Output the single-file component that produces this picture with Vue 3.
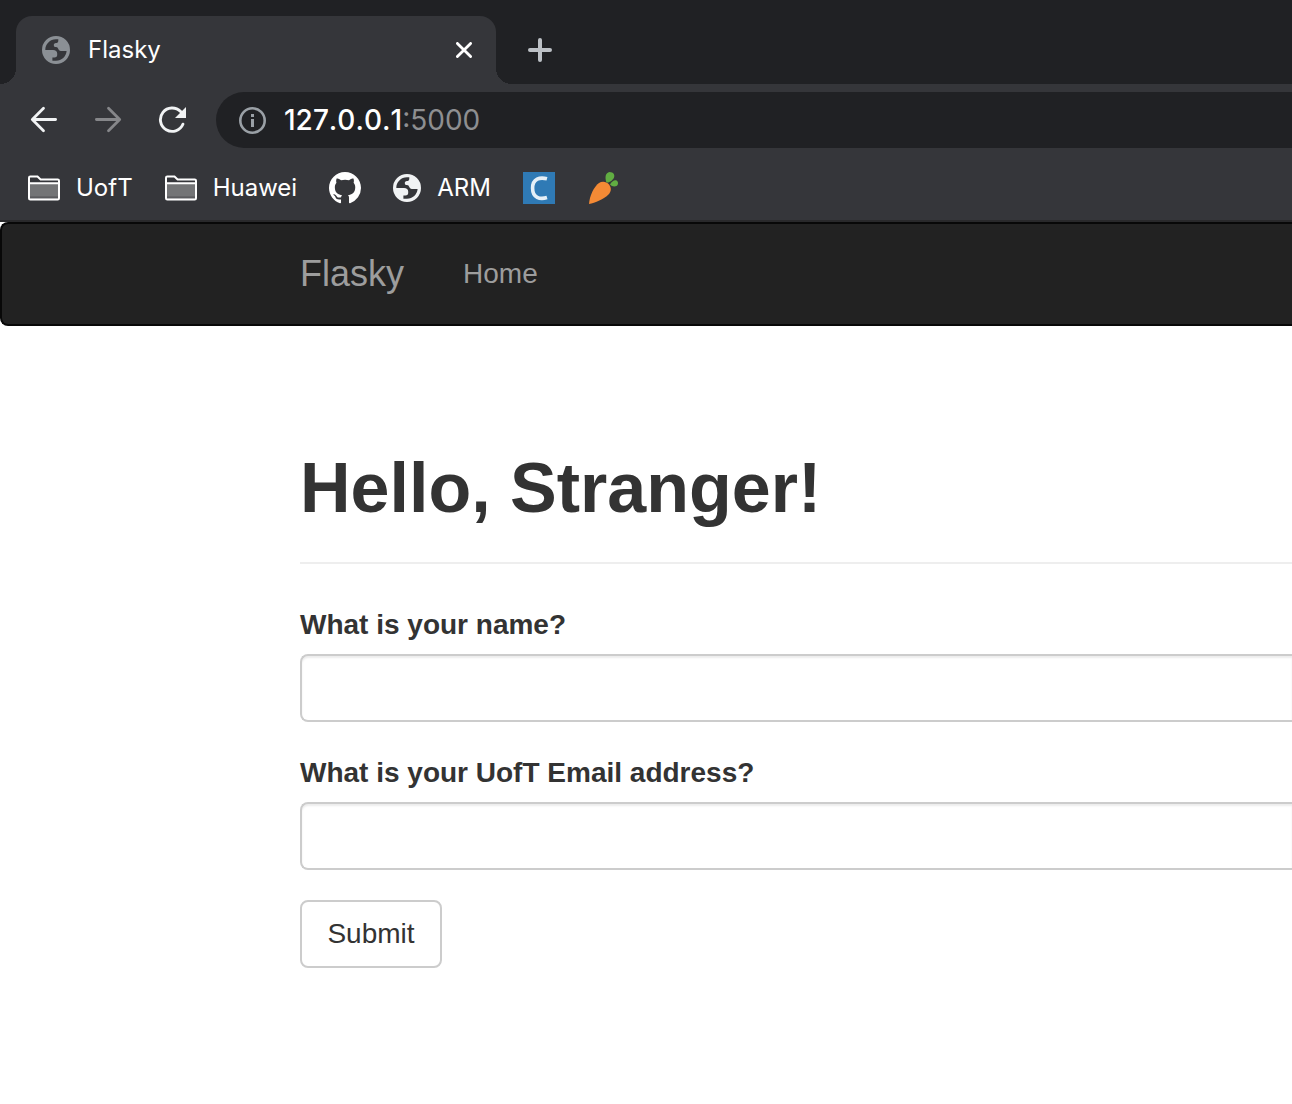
<script setup>
import { ref } from 'vue'

const name = ref('')
const email = ref('')

const globePath =
  'M14 0a14 14 0 1 0 0 28a14 14 0 1 0 0-28Z' +
  'M3.3 14C3.3 8.2 8 3.3 14 3.3H16.3V4.4C16.3 6.2 15.4 7 14 7C12.4 7 11.8 8 11.8 9.2C11.8 10.6 12.7 11 14 11C16.6 11 16 14.9 18.8 14.9H24.6C24.2 20.2 19.6 24.7 14 24.7H10.4V21.4H12.4C14.3 21.4 15.2 20.4 15.2 18.7V17.6C15.2 15.4 13.6 14 11 14Z'
</script>

<template>
  <div class="window">
    <header class="chrome">
      <div class="tab-strip">
        <div class="tab">
          <svg class="globe muted" viewBox="0 0 28 28" aria-hidden="true">
            <path :d="globePath" fill-rule="evenodd" />
          </svg>
          <span class="tab-title">Flasky</span>
          <button class="icon-button" type="button" aria-label="Close tab">
            <svg width="16" height="16" viewBox="0 0 16 16">
              <path d="M1.4 1.4 14.6 14.6M14.6 1.4 1.4 14.6" stroke="#fff" stroke-width="2.8" stroke-linecap="round" />
            </svg>
          </button>
        </div>
        <button class="icon-button new-tab" type="button" aria-label="New tab">
          <svg width="24" height="24" viewBox="0 0 24 24">
            <path d="M12 2V22M2 12H22" stroke="#bdc1c6" stroke-width="4" stroke-linecap="round" />
          </svg>
        </button>
      </div>

      <div class="toolbar">
        <nav class="controls" aria-label="Browser controls">
          <button class="icon-button" type="button" aria-label="Back">
            <svg width="28" height="28" viewBox="0 0 28 28" fill="none" stroke="#f1f3f4" stroke-width="2.8" stroke-linecap="round" stroke-linejoin="round">
              <path d="M25.6 13.5H2.6M13.5 2.3 2.3 13.5 13.5 24.7" />
            </svg>
          </button>
          <button class="icon-button" type="button" aria-label="Forward">
            <svg width="28" height="28" viewBox="0 0 28 28" fill="none" stroke="#86878a" stroke-width="2.8" stroke-linecap="round" stroke-linejoin="round">
              <path d="M2.4 13.5H25.4M14.5 2.3 25.7 13.5 14.5 24.7" />
            </svg>
          </button>
          <button class="icon-button" type="button" aria-label="Reload">
            <svg width="28" height="28" viewBox="0 0 28 28">
              <path d="M22.6 5.6A11.7 11.7 0 1 0 24.9 18.2" fill="none" stroke="#f1f3f4" stroke-width="2.9" stroke-linecap="round" />
              <path d="M28 1V12H17Z" fill="#f1f3f4" />
            </svg>
          </button>
        </nav>
        <div class="omnibox">
          <svg width="28" height="28" viewBox="0 0 28 28" aria-hidden="true">
            <circle cx="14.5" cy="14.5" r="12.2" fill="none" stroke="#9aa0a6" stroke-width="2.6" />
            <path d="M13 8h3v3h-3zM13 13h3v8h-3z" fill="#9aa0a6" />
          </svg>
          <span class="url">127.0.0.1<span class="port">:5000</span></span>
        </div>
      </div>

      <nav class="bookmarks" aria-label="Bookmarks">
        <a v-for="folder in ['UofT', 'Huawei']" :key="folder" class="bookmark" href="#">
          <svg width="32" height="26" viewBox="0 0 32 26">
            <path d="M2 9H30V24H2Z" fill="#737476" />
            <path d="M2 21.4H30V23.5H2Z" fill="#5a5b5e" />
            <path d="M1 8.3H31M1 22.5V2.8Q1 1.5 2.3 1.5H9.5L12.6 4.5H29.7Q31 4.5 31 5.8V23.2Q31 24.5 29.7 24.5H2.3Q1 24.5 1 23.2Z" fill="none" stroke="#fff" stroke-width="2" />
          </svg>
          <span>{{ folder }}</span>
        </a>
        <a class="bookmark" href="#" aria-label="GitHub">
          <svg width="32" height="32" viewBox="0 0 16 16">
            <path fill="#fff" d="M8 0C3.58 0 0 3.58 0 8c0 3.54 2.29 6.53 5.47 7.59.4.07.55-.17.55-.38 0-.19-.01-.82-.01-1.49-2.01.37-2.53-.49-2.69-.94-.09-.23-.48-.94-.82-1.13-.28-.15-.68-.52-.01-.53.63-.01 1.08.58 1.23.82.72 1.21 1.87.87 2.33.66.07-.52.28-.87.51-1.07-1.78-.2-3.64-.89-3.64-3.95 0-.87.31-1.59.82-2.15-.08-.2-.36-1.02.08-2.12 0 0 .67-.21 2.2.82.64-.18 1.32-.27 2-.27s1.36.09 2 .27c1.53-1.04 2.2-.82 2.2-.82.44 1.1.16 1.92.08 2.12.51.56.82 1.27.82 2.15 0 3.07-1.87 3.75-3.65 3.95.29.25.54.73.54 1.48 0 1.07-.01 1.93-.01 2.2 0 .21.15.46.55.38A8.01 8.01 0 0 0 16 8c0-4.42-3.58-8-8-8Z" />
          </svg>
        </a>
        <a class="bookmark" href="#">
          <svg class="globe" viewBox="0 0 28 28">
            <path :d="globePath" fill-rule="evenodd" />
          </svg>
          <span>ARM</span>
        </a>
        <a class="bookmark" href="#" aria-label="C reference">
          <svg width="32" height="32" viewBox="0 0 32 32">
            <path d="M0 0H32V32H0Z" fill="#2f7ab5" />
            <path d="M24 6.8C17 5 9.6 6.5 9.6 16.2S17 27.6 24 25.5" fill="none" stroke="#e4eff7" stroke-width="3.6" />
          </svg>
        </a>
        <a class="bookmark" href="#" aria-label="Carrot">
          <svg width="32" height="32" viewBox="0 0 32 32">
            <path d="M2 32C2.5 24 7 14.5 12 11C15 9 19.5 9.5 22 12.5C24.5 15.5 24.5 19.5 21.5 22.5C17 27 8 31 2 32Z" fill="#f48a35" />
            <path d="M19.5 10.5C17.5 5.5 18.5 .5 22.5 0C26.5 0 28 3 27 5.5C26 8 22.500 11 19.5 10.5Z" fill="#61ad42" />
            <path d="M23 12.5C24.500 9.500 27.500 7.500 29.500 8.500C31.500 9.500 31.500 13 29.500 14C27.500 15 24.500 14.500 23 12.500Z" fill="#61ad42" />
          </svg>
        </a>
      </nav>
    </header>

    <div class="page">
      <nav class="navbar" aria-label="Main">
        <a class="brand" href="#">Flasky</a>
        <a class="nav-link" href="#">Home</a>
      </nav>
      <main class="content">
        <h1>Hello, Stranger!</h1>
        <form @submit.prevent>
          <div class="field">
            <label for="name">What is your name?</label>
            <input id="name" v-model="name" type="text" />
          </div>
          <div class="field">
            <label for="email">What is your UofT Email address?</label>
            <input id="email" v-model="email" type="text" />
          </div>
          <button class="submit" type="submit">Submit</button>
        </form>
      </main>
    </div>
  </div>
</template>

<style>
body {
  margin: 0;
  background: #fff;
}
</style>

<style scoped>
* {
  box-sizing: border-box;
}
a {
  text-decoration: none;
}
svg {
  display: block;
  flex: none;
}
.window {
  font-family: 'Liberation Sans', Arial, sans-serif;
  color: #333;
  overflow: hidden;
}
.chrome {
  background: #35363a;
  border-bottom: 2px solid #29292b;
  color: #fff;
  font: 400 24px/32px Inter, sans-serif;
}
.icon-button {
  display: grid;
  place-items: center;
  padding: 0;
  border: 0;
  background: none;
}
.tab-strip {
  display: flex;
  height: 84px;
  padding: 16px 16px 0;
  background: #202124;
}
.tab {
  position: relative;
  display: flex;
  align-items: center;
  width: 480px;
  padding: 0 24px 0 26px;
  border-radius: 16px 16px 0 0;
  background: #35363a;
}
.tab::before,
.tab::after {
  content: '';
  position: absolute;
  bottom: 0;
  width: 16px;
  height: 16px;
}
.tab::before {
  right: 100%;
  background: radial-gradient(circle at 0 0, #202124 16px, #35363a 16px);
}
.tab::after {
  left: 100%;
  background: radial-gradient(circle at 100% 0, #202124 16px, #35363a 16px);
}
.tab-title {
  flex: 1;
  margin-left: 18px;
}
.globe {
  width: 28px;
  height: 28px;
  fill: #f1f3f4;
}
.globe.muted {
  fill: #8b9095;
}
.new-tab {
  margin-left: 32px;
}
.toolbar {
  display: flex;
  align-items: center;
  height: 72px;
  padding-left: 30px;
}
.controls {
  display: flex;
  gap: 36px;
}
.omnibox {
  display: flex;
  flex: 1;
  align-items: center;
  gap: 18px;
  height: 56px;
  margin-left: 30px;
  padding-left: 22px;
  border-radius: 28px 0 0 28px;
  background: #202124;
}
.url {
  font-size: 28px;
  font-weight: 500;
  font-kerning: none;
}
.port {
  color: #8e8f91;
  font-weight: 400;
}
.bookmarks {
  display: flex;
  align-items: center;
  gap: 32px;
  height: 64px;
  padding-left: 28px;
}
.bookmark {
  display: flex;
  align-items: center;
  gap: 16px;
  color: #fff;
}
.navbar {
  display: flex;
  align-items: center;
  gap: 59px;
  height: 104px;
  padding-left: 298px;
  border: 2px solid #080808;
  border-right: 0;
  border-radius: 8px 0 0 8px;
  background: #222;
}
.navbar a {
  color: #9d9d9d;
}
.brand {
  font-size: 36px;
}
.nav-link {
  font-size: 28px;
}
.content {
  padding: 122px 0 40px 300px;
}
h1 {
  margin: 0 0 40px;
  padding-bottom: 34px;
  border-bottom: 2px solid #eee;
  font-size: 70px;
  line-height: 80px;
}
.field {
  margin-bottom: 30px;
}
label {
  display: block;
  margin-bottom: 8px;
  font-size: 28px;
  font-weight: 700;
  line-height: 42px;
}
.field input {
  display: block;
  width: 100%;
  height: 68px;
  padding: 12px 24px;
  border: 2px solid #ccc;
  border-right: 0;
  border-radius: 8px 0 0 8px;
  outline: 0;
  box-shadow: inset 0 2px 2px rgb(0 0 0 / 8%);
  color: #555;
  font: 28px/40px 'Liberation Sans', Arial, sans-serif;
}
.submit {
  min-width: 142px;
  height: 68px;
  padding: 0 24px;
  border: 2px solid #ccc;
  border-radius: 8px;
  background: #fff;
  color: #333;
  font: 28px/40px 'Liberation Sans', Arial, sans-serif;
}
</style>
